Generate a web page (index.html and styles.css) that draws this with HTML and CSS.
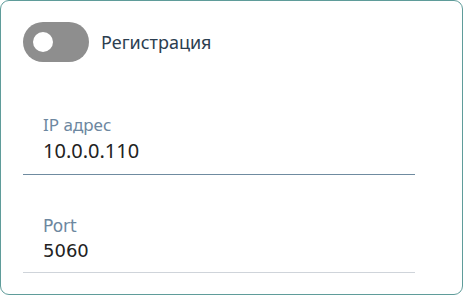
FILE: index.html
```html
<!DOCTYPE html>
<html lang="ru">
<head>
<meta charset="UTF-8">
<meta name="viewport" content="width=device-width, initial-scale=1.0">
<title>SIP</title>
<link rel="stylesheet" href="styles.css">
</head>
<body>

    <div class="card">
        <div class="toggle-row">
            <div class="toggle">
                <div class="knob"></div>
            </div>
            <span class="toggle-label">Регистрация</span>
        </div>

        <div class="field field-active">
            <div class="field-label">IP адрес</div>
            <div class="field-value">10.0.0.110</div>
        </div>

        <div class="field field-port">
            <div class="field-label">Port</div>
            <div class="field-value">5060</div>
        </div>
    </div>

</body>
</html>
```

FILE: styles.css
```css
body {
    margin: 0;
    font-family: "Noto Sans", "Open Sans", sans-serif;
    background: #fff;
}
.card {
    box-sizing: border-box;
    width: 463px;
    height: 295px;
    border: 1px solid #5f9c9a;
    border-radius: 9px;
    padding: 21px 47px 0 22px;
}
.toggle-row {
    display: flex;
    align-items: center;
    gap: 12px;
    height: 40px;
}
.toggle {
    box-sizing: border-box;
    width: 66px;
    height: 40px;
    border-radius: 20px;
    background: #8e8e8e;
    padding: 10px;
}
.knob {
    width: 20px;
    height: 20px;
    border-radius: 50%;
    background: #fff;
}
.toggle-label {
    font-size: 18px;
    color: #2c3e50;
}
.field {
    padding-left: 20px;
    border-bottom: 1px solid #cfd4da;
}
.field-active {
    margin-top: 52px;
    padding-bottom: 9px;
    border-bottom-color: #6f8ba0;
}
.field-port {
    margin-top: 40px;
    padding-bottom: 7px;
    font-family: "DejaVu Sans", sans-serif;
}
.field-label {
    font-size: 17px;
    line-height: 22px;
    color: #6d87a0;
}
.field-value {
    margin-top: 1px;
    font-size: 20px;
    line-height: 28px;
    color: #222;
}
.field-port .field-label {
    font-size: 17px;
}
.field-port .field-value {
    margin-top: 0;
    font-size: 18px;
}
```
